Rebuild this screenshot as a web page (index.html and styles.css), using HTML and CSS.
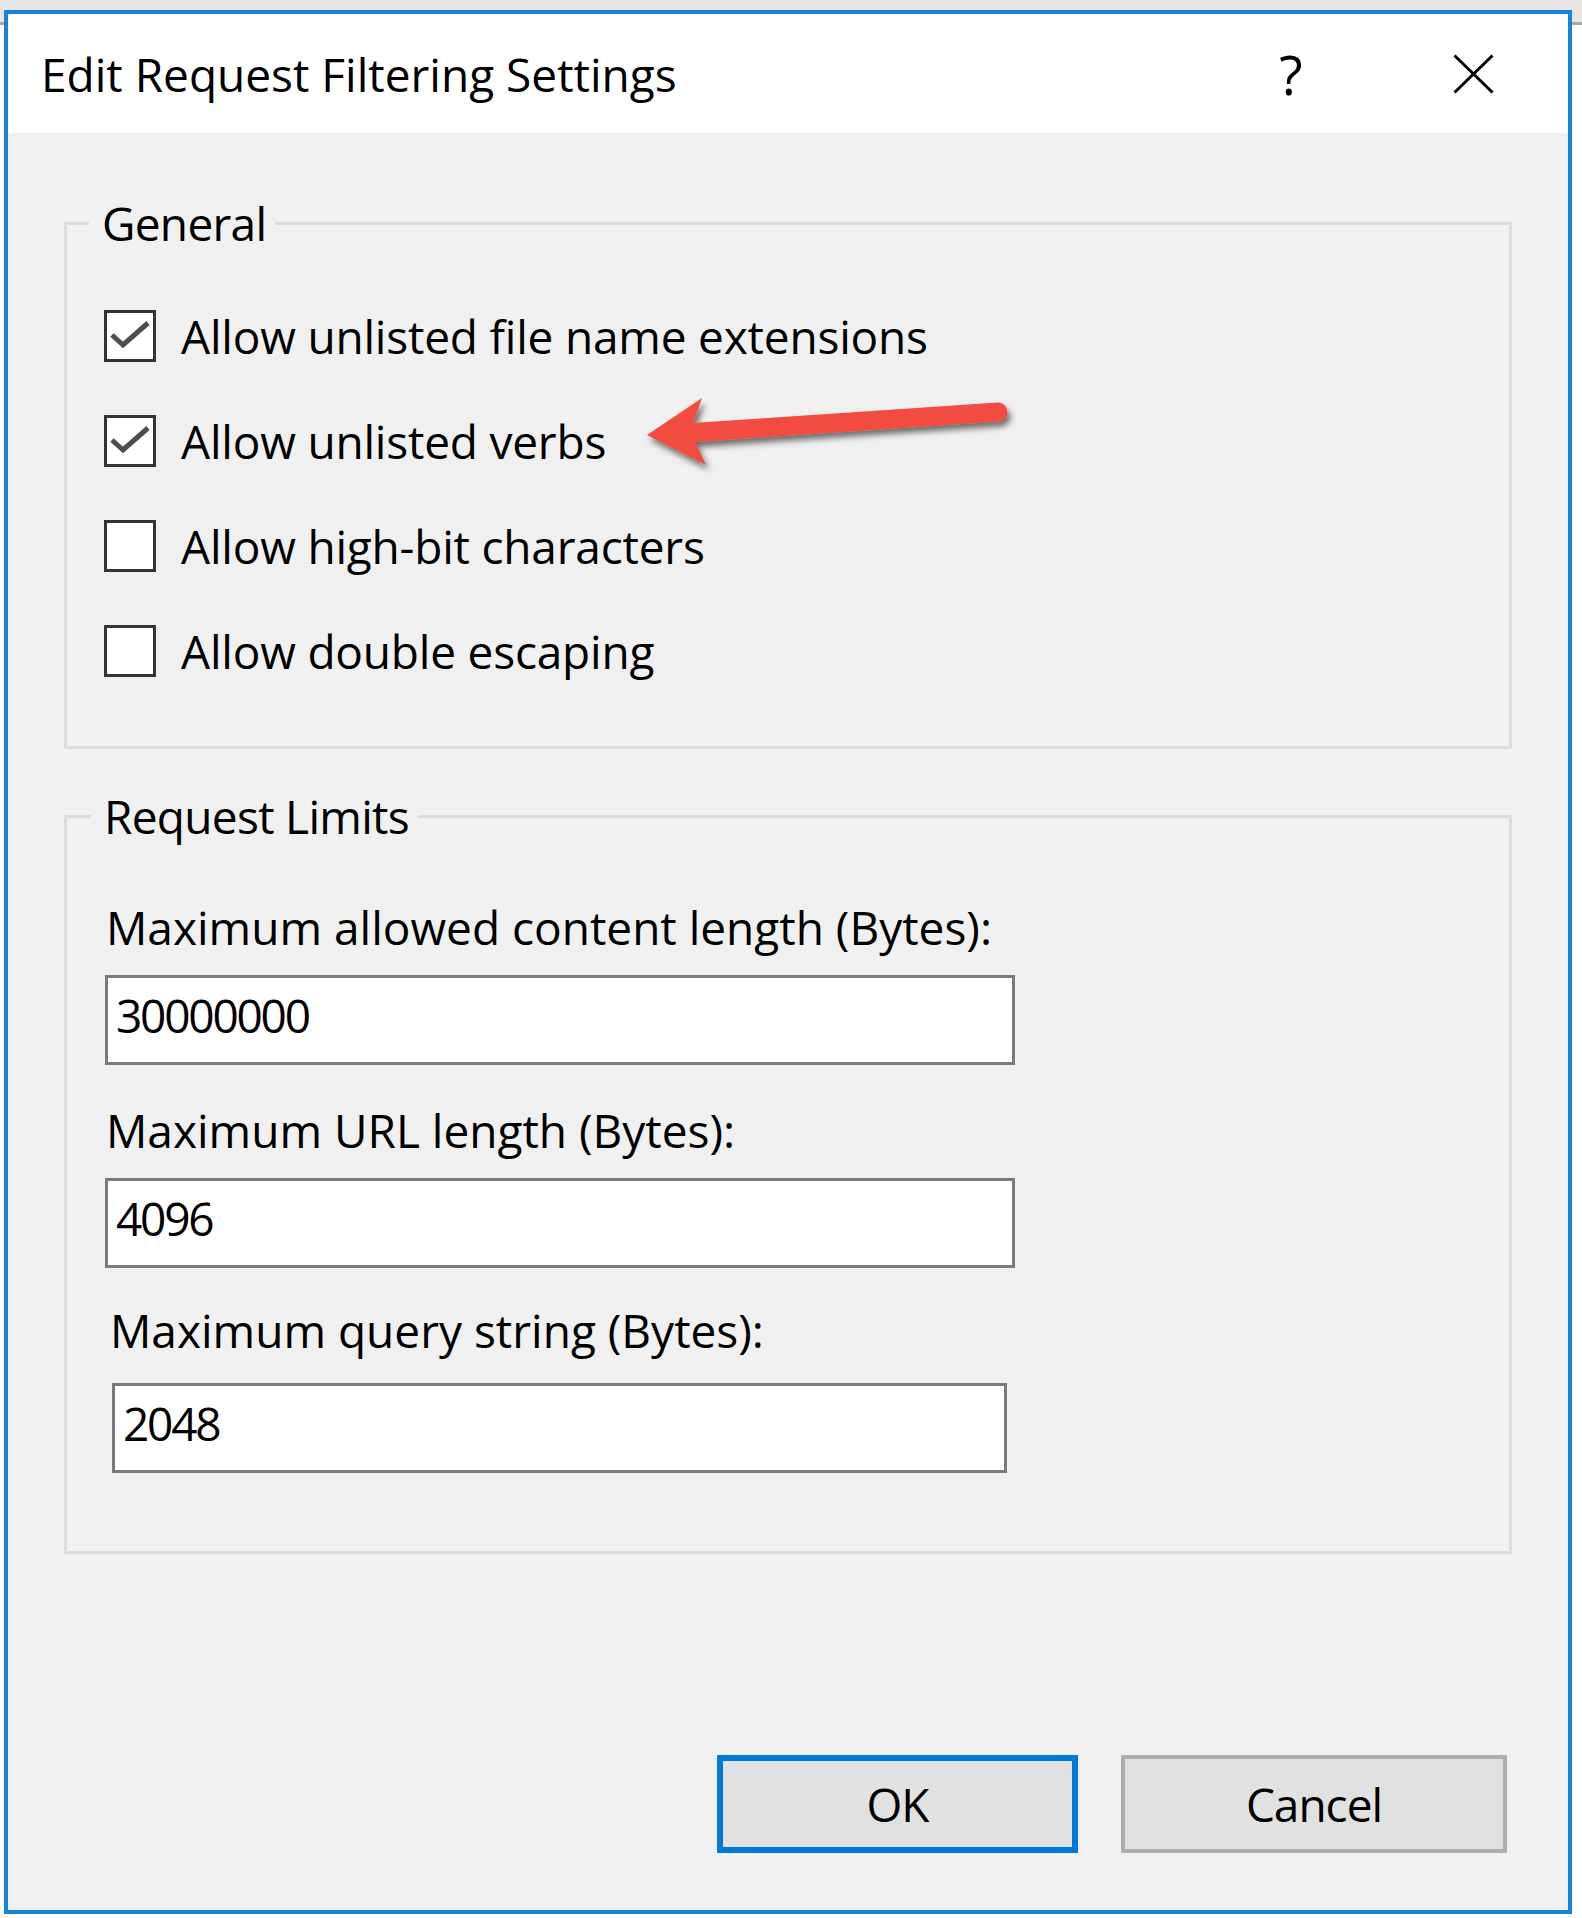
FILE: index.html
```html
<!DOCTYPE html>
<html lang="en">
<head>
<meta charset="utf-8">
<title>Edit Request Filtering Settings</title>
<link rel="stylesheet" href="styles.css">
</head>
<body>
<div class="dialog">
  <div class="titlebar">
    <div class="title">Edit Request Filtering Settings</div>
    <div class="help">?</div>
    <div class="close">
      <svg width="41" height="40" viewBox="0 0 41 40"><path d="M1.5 1.5 L39.5 38.5 M39.5 1.5 L1.5 38.5" stroke="#000" stroke-width="3" fill="none"/></svg>
    </div>
  </div>
  <div class="content">
    <fieldset class="group group-general">
      <legend>General</legend>
      <div class="check-row">
        <span class="checkbox"><svg width="46" height="46" viewBox="0 0 46 46"><path d="M5 22 L16 32 L41 10" stroke="#4d4d4d" stroke-width="5" fill="none"/></svg></span>
        <span class="check-label">Allow unlisted file name extensions</span>
      </div>
      <div class="check-row">
        <span class="checkbox"><svg width="46" height="46" viewBox="0 0 46 46"><path d="M5 22 L16 32 L41 10" stroke="#4d4d4d" stroke-width="5" fill="none"/></svg></span>
        <span class="check-label">Allow unlisted verbs</span>
      </div>
      <div class="check-row">
        <span class="checkbox"></span>
        <span class="check-label">Allow high-bit characters</span>
      </div>
      <div class="check-row">
        <span class="checkbox"></span>
        <span class="check-label">Allow double escaping</span>
      </div>
    </fieldset>
    <fieldset class="group group-limits">
      <legend>Request Limits</legend>
      <div class="field-label">Maximum allowed content length (Bytes):</div>
      <div class="textbox">30000000</div>
      <div class="field-label field-gap">Maximum URL length (Bytes):</div>
      <div class="textbox">4096</div>
      <div class="field-label field-gap field-label-query">Maximum query string (Bytes):</div>
      <div class="textbox textbox-query">2048</div>
    </fieldset>
    <div class="buttons">
      <button class="btn btn-default">OK</button>
      <button class="btn btn-cancel">Cancel</button>
    </div>
    <svg class="annotation-arrow" width="400" height="110" viewBox="0 0 400 110">
      <defs>
        <filter id="shadow" x="-10%" y="-30%" width="130%" height="170%">
          <feDropShadow dx="3" dy="5" stdDeviation="3" flood-color="#000" flood-opacity="0.55"/>
        </filter>
      </defs>
      <path d="M17 55 L72 18 L63 43 L368 22.5 A9.5 9.5 0 0 1 368 41.5 L65 62 L76 85 Z" fill="#f24c40" filter="url(#shadow)"/>
    </svg>
  </div>
</div>
</body>
</html>
```

FILE: styles.css
```css
html, body {
  margin: 0;
  padding: 0;
}

body {
  width: 1582px;
  height: 1918px;
  overflow: hidden;
  background: linear-gradient(#e6e6e6 0, #e6e6e6 22px, #a8a8a8 22px, #a8a8a8 25px, #ffffff 25px);
  font-family: "Segoe UI", "Open Sans", "Noto Sans", sans-serif;
  color: #000;
}

.dialog {
  box-sizing: border-box;
  margin: 10px 0 0 4px;
  width: 1568px;
  height: 1904px;
  border: 4px solid #1883d7;
  display: flex;
  flex-direction: column;
  background: #f0f0f0;
}

.titlebar {
  height: 119px;
  flex: none;
  background: #ffffff;
  display: flex;
  align-items: center;
  padding: 0 74px 0 33px;
}

.title {
  flex: 1;
  font-size: 46px;
  line-height: 56px;
  letter-spacing: 0;
}

.help {
  width: 40px;
  text-align: center;
  font-size: 54px;
  line-height: 56px;
  margin-right: 142px;
}

.close {
  width: 41px;
  height: 40px;
}

.close svg {
  display: block;
}

.content {
  position: relative;
  flex: 1;
  padding: 60px 56px 0 56px;
}

.group {
  margin: 0;
  border: 3px solid #dcdcdc;
  min-width: 0;
}

.group legend {
  padding: 0 9px 0 13px;
  font-size: 46px;
  line-height: 60px;
  letter-spacing: -0.7px;
}

.group-general {
  padding: 30.5px 0 42px 22px;
}

.check-row {
  margin-left: 15px;
  height: 105px;
  display: flex;
  align-items: center;
  gap: 25px;
}

.checkbox {
  box-sizing: border-box;
  width: 52px;
  height: 52px;
  border: 3px solid #333333;
  background: #ffffff;
  flex: none;
}

.checkbox svg {
  display: block;
}

.check-label {
  font-size: 46px;
  line-height: 56px;
  letter-spacing: -0.2px;
}

.group-limits {
  margin-top: 37.5px;
  padding: 53px 0 77.5px 24px;
}

.field-label {
  margin-left: 15px;
  font-size: 46px;
  line-height: 56px;
  letter-spacing: 0;
}

.field-gap {
  margin-top: 37px;
}

.field-label-query {
  margin-top: 34px;
  margin-left: 19px;
}

.textbox {
  box-sizing: border-box;
  margin-top: 20px;
  margin-left: 14px;
  width: 910px;
  height: 90px;
  border: 3px solid #7a7a7a;
  background: #ffffff;
  padding: 9px 8px;
  font-size: 46px;
  line-height: 56px;
  letter-spacing: -2.2px;
}

.textbox-query {
  margin-top: 25px;
  margin-left: 21px;
  width: 895px;
}

.buttons {
  margin-top: 201.5px;
  margin-right: 5px;
  display: flex;
  justify-content: flex-end;
  gap: 43px;
}

.btn {
  box-sizing: border-box;
  height: 98px;
  background: #e1e1e1;
  font-family: inherit;
  font-size: 46px;
  letter-spacing: -1px;
  color: #000;
  padding: 0;
}

.btn-default {
  width: 361px;
  border: 6px solid #0078d7;
}

.btn-cancel {
  width: 386px;
  border: 4px solid #adadad;
}

.annotation-arrow {
  position: absolute;
  left: 622px;
  top: 247px;
  overflow: visible;
}
```
